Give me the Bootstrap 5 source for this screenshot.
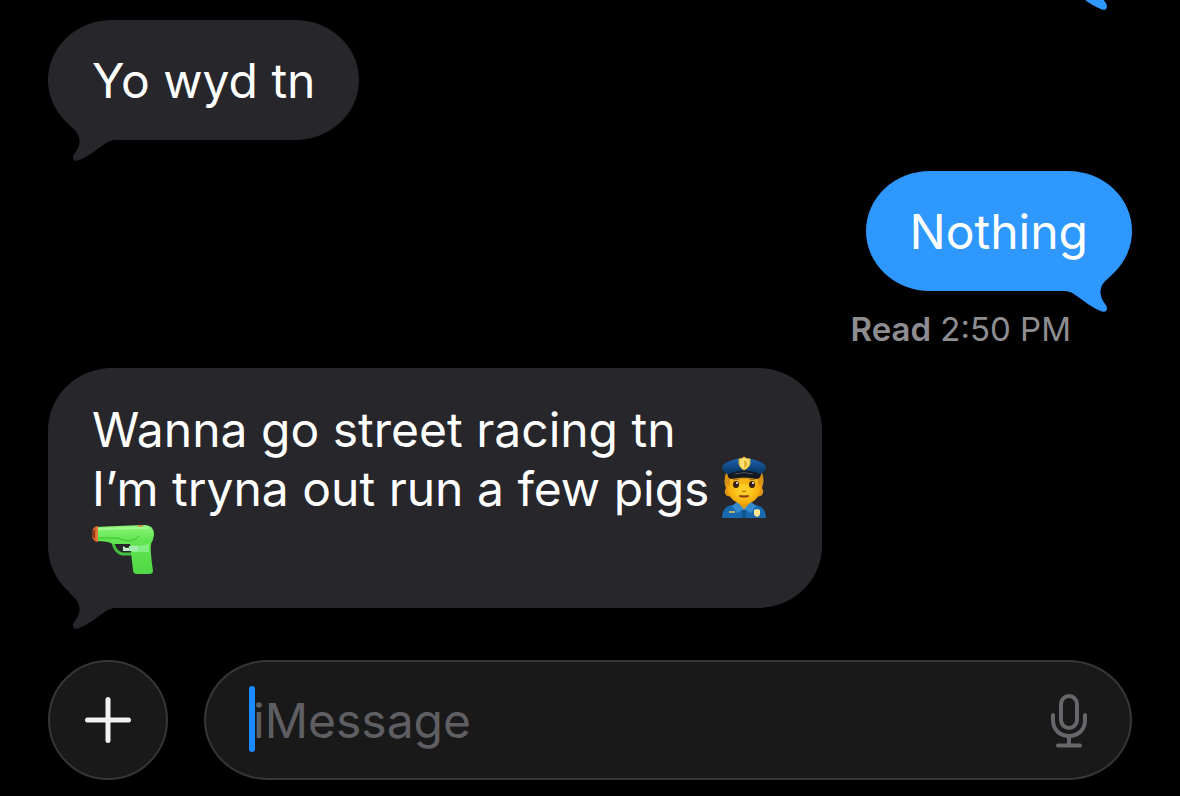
<!DOCTYPE html>
<html lang="en">
<head>
<meta charset="utf-8">
<meta name="viewport" content="width=device-width, initial-scale=1">
<title>Messages</title>
<link href="https://cdn.jsdelivr.net/npm/bootstrap@5.3.0/dist/css/bootstrap.min.css" rel="stylesheet">
<style>
body { background: #000; color: #fff; font-family: Inter, "Liberation Sans", sans-serif; }
.chat { padding: 0 48px 16px; }
.thread { gap: 31px; }
.bubble { position: relative; min-height: 120px; max-width: 774px; padding: 31px 44px 29px; border-radius: 64px / 60px; font-size: 48px; line-height: 60px; background: var(--tone); }
.bubble.tall { padding: 32px 44px 31px; line-height: 59px; border-radius: 64px / 62px; }
.received { --tone: #27262b; }
.sent { --tone: #2e98ff; }
.tail { position: absolute; left: 16px; bottom: -23px; width: 54px; height: 44px; fill: var(--tone); }
.sent .tail { left: auto; right: 16px; transform: scaleX(-1); }
.previous { width: 265px; }
.receipt { font-size: 33px; line-height: 40px; color: #8e8d92; margin: 18px 61px 19px 0; }
.emoji { width: 62px; height: 62px; margin-top: -6px; vertical-align: -12px; }
.composer { gap: 36px; margin-top: 52px; }
.plus { width: 120px; height: 120px; }
.plus, .field input { background: #191919; border: 2px solid #363636; }
.plus:hover { background: #222; border-color: #444; }
.field input { height: 120px; padding: 0 120px 0 47px; border-radius: 64px / 60px; font-size: 48px; line-height: 60px; color: #fff; caret-color: #1b8cff; }
.field input:focus { background: #191919; border-color: #363636; color: #fff; box-shadow: none; }
.field input::placeholder { color: #5f5e63; opacity: 1; }
.cursor { position: absolute; left: 45px; top: 26px; width: 6px; height: 66px; border-radius: 3px; background: #1b8cff; }
.mic { position: absolute; right: 42px; top: 31px; }
</style>
</head>
<body>
<svg width="0" height="0" class="position-absolute" aria-hidden="true">
  <symbol id="tail" viewBox="0 0 54 44"><path d="M4 5C10 10 15.500 14 15.500 22C15.500 31 9 34 9 38.500C9 41 11 42.500 14 41.500C24 38 32 31 40 25.500C44 22.500 46 21 54 21V8H12Z"/></symbol>
</svg>
<main class="chat vh-100 d-flex flex-column justify-content-end overflow-hidden">
  <section class="thread d-flex flex-column flex-shrink-0" aria-label="Conversation">
    <div class="bubble sent previous align-self-end"><svg class="tail"><use href="#tail"/></svg></div>
    <div class="bubble received align-self-start"><svg class="tail"><use href="#tail"/></svg>Yo wyd tn</div>
    <div class="bubble sent align-self-end"><svg class="tail"><use href="#tail"/></svg>Nothing</div>
  </section>
  <p class="receipt text-end flex-shrink-0"><span class="fw-semibold">Read</span> 2:50 PM</p>
  <div class="bubble tall received align-self-start flex-shrink-0"><svg class="tail"><use href="#tail"/></svg>Wanna go street racing tn<br>I’m tryna out run a few pigs<svg class="emoji ms-1" viewBox="0 0 62 62" role="img" aria-label="Police officer">
      <defs>
        <linearGradient id="cap" x2="0" y2="1"><stop stop-color="#1c65b4"/><stop offset="1" stop-color="#073565"/></linearGradient>
        <radialGradient id="skin"><stop offset=".3" stop-color="#ffcf25"/><stop offset="1" stop-color="#f4a707"/></radialGradient>
      </defs>
      <path d="M13 17Q10 26 13 32Q10 37 14 40L22 41H41L48 40Q52 36 49 32Q52 25 49 17Z" fill="#dc9418"/>
      <path d="M24 39H38V50L31 56L24 50Z" fill="#e5a006"/>
      <path d="M9 62Q9 50 20 49L25 47L31 54L37 47L43 49Q53 51 53 62Z" fill="#1969b0"/>
      <path d="M24 46L19 50L24 57L31 53L38 57L43 50L38 46L31 53Z" fill="#378bd0"/>
      <path d="M29 54H33V62H29Z" fill="#105590"/>
      <path d="M14 20H48V30C48 42 39 48 31 48S14 42 14 30Z" fill="url(#skin)"/>
      <path d="M12 21L15 16H47L50 21L47 31L44 24H18L15 31Z" fill="#d89317"/>
      <path d="M17 23H45V28H17Z" fill="#f7b719"/>
      <ellipse cx="23" cy="28.500" rx="3" ry="3.500" fill="#39200c"/><ellipse cx="39" cy="28.500" rx="3" ry="3.500" fill="#39200c"/>
      <circle cx="24" cy="27" r="1" fill="#fff"/><circle cx="40" cy="27" r="1" fill="#fff"/>
      <path d="M20 24Q23 22 26 24M36 24Q39 22 42 24" fill="none" stroke="#9c6416" stroke-width="1"/>
      <path d="M29 35Q31 36 33 35" fill="none" stroke="#d48304" stroke-width="1.500"/>
      <path d="M27 40Q31 41 35 40" fill="none" stroke="#884213" stroke-width="2" stroke-linecap="round"/>
      <path d="M9 12Q9 8 17 5Q31-1 45 5Q53 8 53 12Q51 16 48 18H14Q10 15 9 12Z" fill="url(#cap)"/>
      <path d="M15 14Q31 9 48 14V19Q31 15 14 19Z" fill="#0a3e70"/>
      <path d="M15 18Q31 11 48 18Q48 22 44 23Q31 20 18 23Q14 22 15 18Z" fill="#141a20"/>
      <path d="M22 18Q31 15 40 18" fill="none" stroke="#465460" stroke-width="1"/>
      <path d="M26 3Q29 3 31 1Q33 3 37 3V8Q36 12 31 14Q27 12 26 8Z" fill="#ffe175" stroke="#e3aa22"/>
      <path d="M31 4V12L34 10V6Z" fill="#e8b52d"/>
      <path d="M16 56H22" stroke="#e9c94c" stroke-width="1.500"/>
      <path d="M41 54L44 53L47 54V58Q47 60 44 61Q41 60 41 58Z" fill="#ffe891"/>
    </svg><svg class="emoji" viewBox="0 -5 62 62" role="img" aria-label="Water pistol">
      <defs><linearGradient id="gun" x2="0" y2="1"><stop stop-color="#8cf579"/><stop offset=".3" stop-color="#62e653"/><stop offset="1" stop-color="#50d745"/></linearGradient></defs>
      <path d="M21 23Q23 32 30 34H41" fill="none" stroke="#46bd3c" stroke-width="3"/>
      <path d="M34 28L31 26V31H41V27Z" fill="#c4ecc6"/>
      <path d="M5 7Q22 6 53 5Q62 5 62 15Q61 21 59 24Q58 31 61 51Q61 54 57 54H45Q41 54 41 50L38 24H21Q16 21 5 21Z" fill="url(#gun)"/>
      <path d="M6 9Q32 8 56 8" fill="none" stroke="#a3fa90" stroke-width="2"/>
      <path d="M6 18H26Q31 20 36 21Q44 20 47 16" fill="none" stroke="#3abd31" stroke-width="1"/>
      <path d="M39 25Q47 27 57 24V32H40Z" fill="#82ef82"/><path d="M37 26H46V31H37Z" fill="#a4ecac"/>
      <path d="M6 6V22Q2 22 0 17V11Q2 6 6 6Z" fill="#dc642b"/>
      <path d="M0 10H3V18H1Q-1 14 0 10Z" fill="#8e3b1b"/>
      <path d="M5 7V21" stroke="#f18a4b"/>
      <path d="M46 5H51V7H46Z" fill="#c7984a"/>
    </svg>
  </div>
  <form class="composer d-flex flex-shrink-0" onsubmit="return false">
    <button type="button" class="plus btn rounded-circle p-0 d-flex align-items-center justify-content-center flex-shrink-0" aria-label="Add attachment">
      <svg width="48" height="48" viewBox="0 0 48 48" fill="none" stroke="#f2f1f3" stroke-width="5" stroke-linecap="round"><path d="M24 3.500V44.500M3.500 24H44.500"/></svg>
    </button>
    <div class="field position-relative flex-grow-1">
      <input type="text" class="form-control" placeholder="iMessage" aria-label="iMessage">
      <span class="cursor"></span>
      <button type="button" class="mic btn border-0 p-0 d-flex" aria-label="Dictate">
        <svg width="42" height="60" viewBox="0 0 42 60" fill="none" stroke="#67666b" stroke-width="4" stroke-linecap="round"><rect x="13" y="5" width="16" height="32" rx="8"/><path d="M5 24V29C5 39 12 45 21 45S37 39 37 29V24M21 45V54M10 54.500H32"/></svg>
      </button>
    </div>
  </form>
</main>
<script src="https://cdn.jsdelivr.net/npm/bootstrap@5.3.0/dist/js/bootstrap.bundle.min.js"></script>
</body>
</html>
